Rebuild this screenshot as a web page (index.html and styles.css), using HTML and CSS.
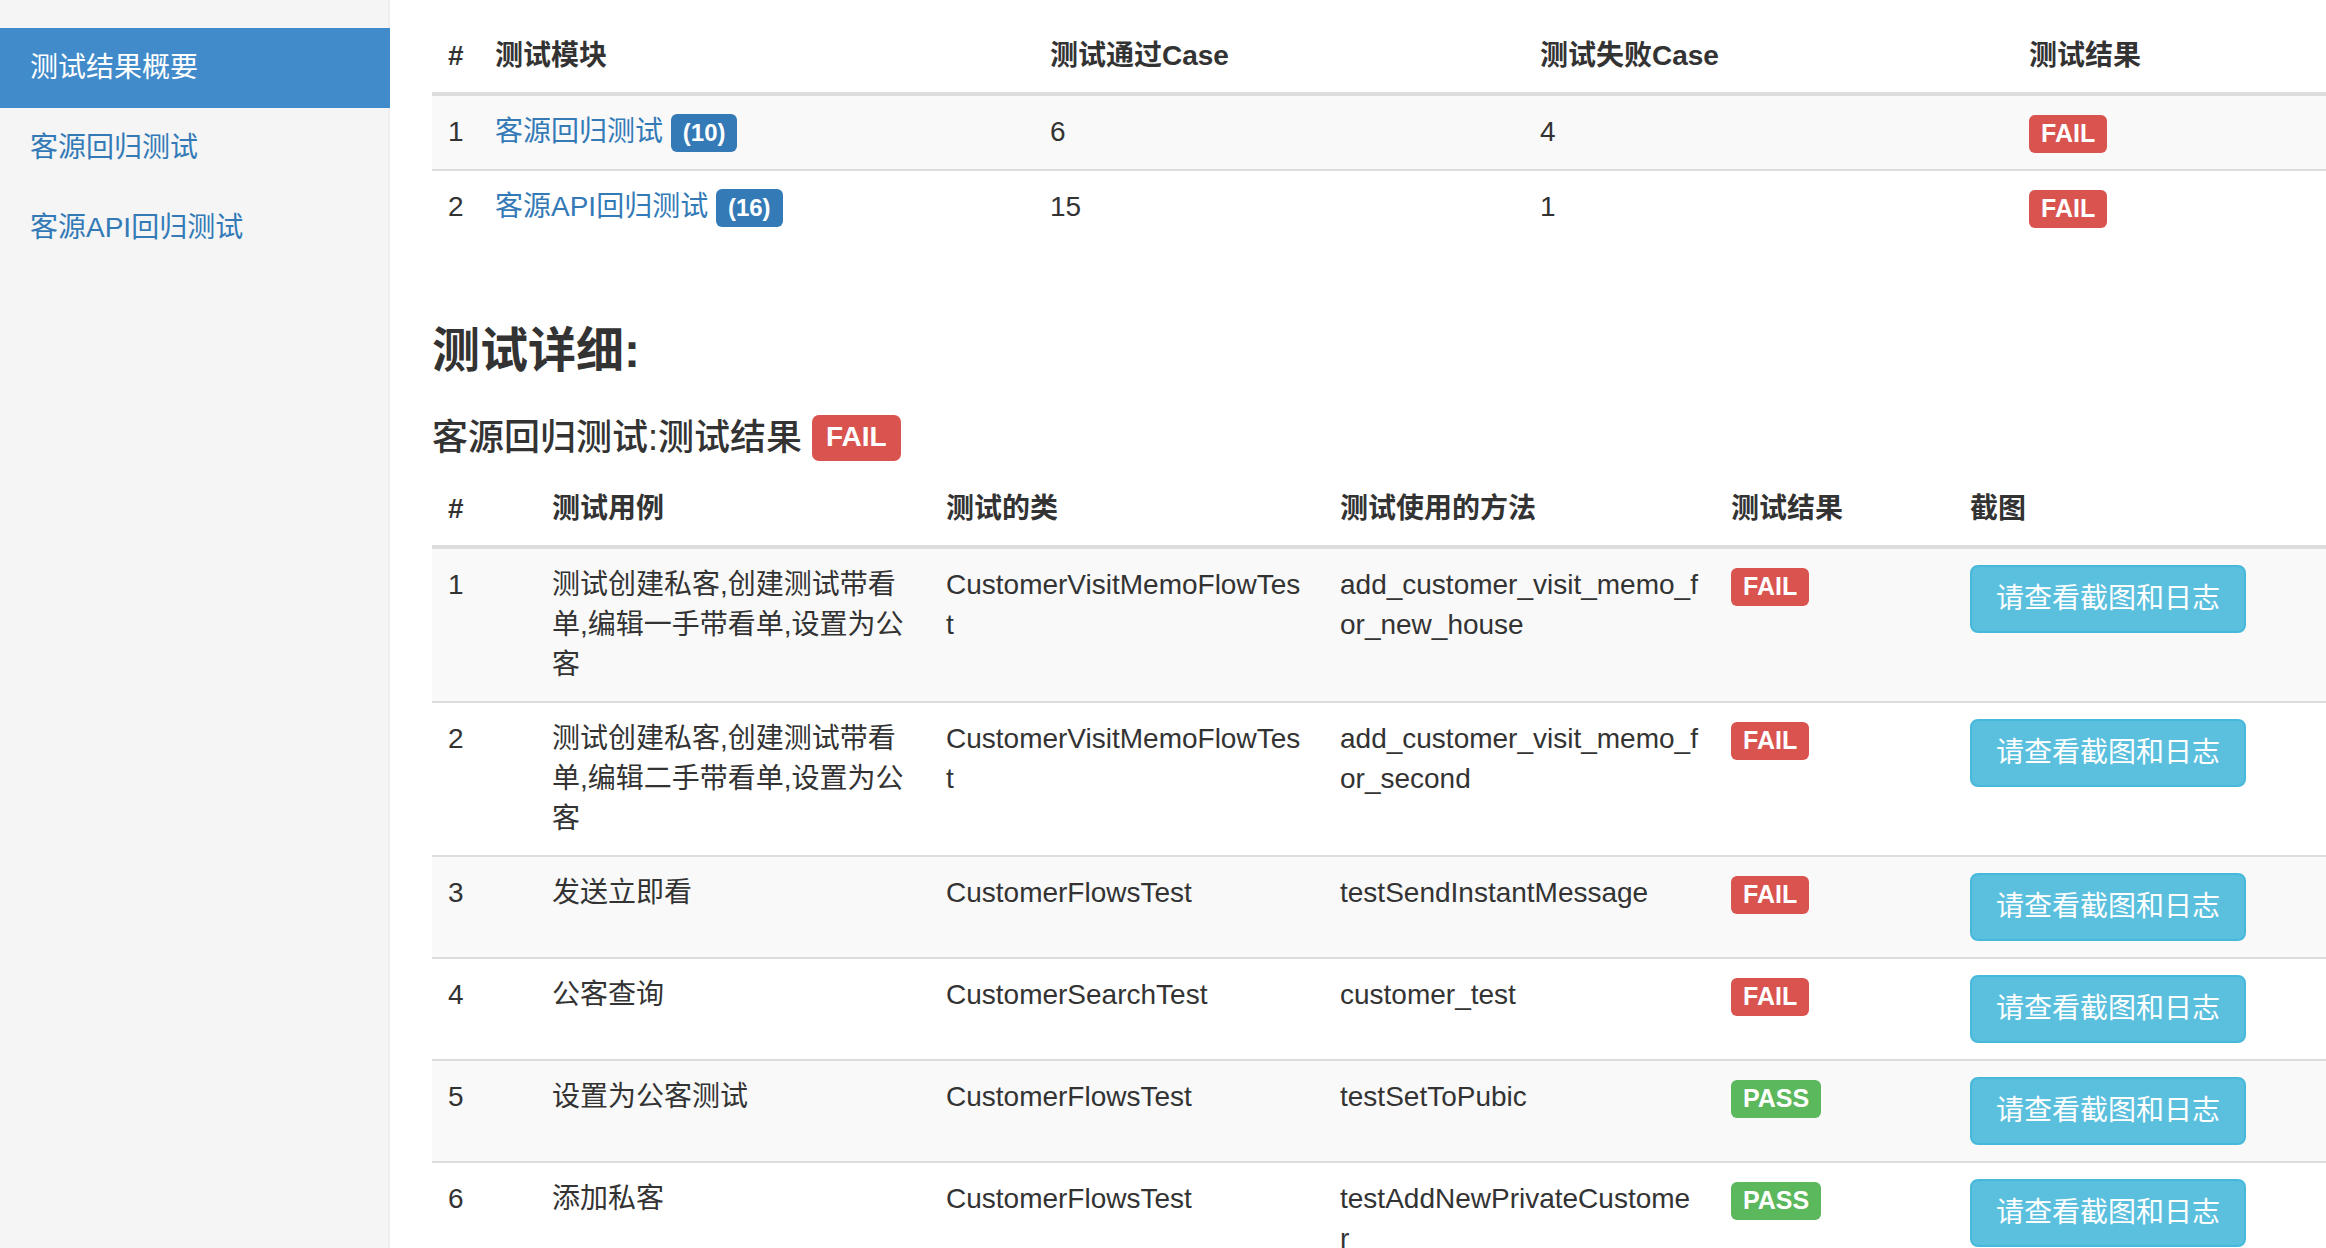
FILE: index.html
```html
<!DOCTYPE html>
<html lang="zh-CN">
<head>
<meta charset="utf-8">
<title>测试报告</title>
<link rel="stylesheet" href="styles.css">
</head>
<body>
<div class="layout">
  <nav class="sidebar">
    <ul class="nav-sidebar">
      <li class="active"><a href="#summary">测试结果概要</a></li>
      <li><a href="#m1">客源回归测试</a></li>
      <li><a href="#m2">客源API回归测试</a></li>
    </ul>
  </nav>
  <main class="main">
    <table class="table table-summary" id="summary">
      <colgroup>
        <col class="s-idx"><col class="s-mod"><col class="s-pass"><col class="s-fail"><col class="s-res">
      </colgroup>
      <thead>
        <tr><th>#</th><th>测试模块</th><th>测试通过Case</th><th>测试失败Case</th><th>测试结果</th></tr>
      </thead>
      <tbody>
        <tr>
          <td>1</td>
          <td><a class="link" href="#m1">客源回归测试</a> <span class="count">(10)</span></td>
          <td>6</td>
          <td>4</td>
          <td><span class="label label-danger">FAIL</span></td>
        </tr>
        <tr>
          <td>2</td>
          <td><a class="link" href="#m2">客源API回归测试</a> <span class="count">(16)</span></td>
          <td>15</td>
          <td>1</td>
          <td><span class="label label-danger">FAIL</span></td>
        </tr>
      </tbody>
    </table>

    <h3 class="section-title">测试详细:</h3>
    <h4 class="module-title" id="m1">客源回归测试:测试结果<span class="label-lg label-danger">FAIL</span></h4>

    <table class="table table-detail">
      <colgroup>
        <col class="d-idx"><col class="d-case"><col class="d-class"><col class="d-method"><col class="d-res"><col class="d-shot">
      </colgroup>
      <thead>
        <tr><th>#</th><th>测试用例</th><th>测试的类</th><th>测试使用的方法</th><th>测试结果</th><th>截图</th></tr>
      </thead>
      <tbody>
        <tr>
          <td>1</td>
          <td>测试创建私客,创建测试带看单,编辑一手带看单,设置为公客</td>
          <td>CustomerVisitMemoFlowTest</td>
          <td>add_customer_visit_memo_for_new_house</td>
          <td><span class="label label-danger">FAIL</span></td>
          <td><a class="btn btn-info" href="#">请查看截图和日志</a></td>
        </tr>
        <tr>
          <td>2</td>
          <td>测试创建私客,创建测试带看单,编辑二手带看单,设置为公客</td>
          <td>CustomerVisitMemoFlowTest</td>
          <td>add_customer_visit_memo_for_second</td>
          <td><span class="label label-danger">FAIL</span></td>
          <td><a class="btn btn-info" href="#">请查看截图和日志</a></td>
        </tr>
        <tr>
          <td>3</td>
          <td>发送立即看</td>
          <td>CustomerFlowsTest</td>
          <td>testSendInstantMessage</td>
          <td><span class="label label-danger">FAIL</span></td>
          <td><a class="btn btn-info" href="#">请查看截图和日志</a></td>
        </tr>
        <tr>
          <td>4</td>
          <td>公客查询</td>
          <td>CustomerSearchTest</td>
          <td>customer_test</td>
          <td><span class="label label-danger">FAIL</span></td>
          <td><a class="btn btn-info" href="#">请查看截图和日志</a></td>
        </tr>
        <tr>
          <td>5</td>
          <td>设置为公客测试</td>
          <td>CustomerFlowsTest</td>
          <td>testSetToPubic</td>
          <td><span class="label label-success">PASS</span></td>
          <td><a class="btn btn-info" href="#">请查看截图和日志</a></td>
        </tr>
        <tr>
          <td>6</td>
          <td>添加私客</td>
          <td>CustomerFlowsTest</td>
          <td>testAddNewPrivateCustomer</td>
          <td><span class="label label-success">PASS</span></td>
          <td><a class="btn btn-info" href="#">请查看截图和日志</a></td>
        </tr>
      </tbody>
    </table>
  </main>
</div>
</body>
</html>
```

FILE: styles.css
```css
* { box-sizing: border-box; }

html, body {
  margin: 0;
  padding: 0;
}

body {
  font-family: "Liberation Sans", "Noto Sans CJK SC", sans-serif;
  font-size: 28px;
  line-height: 40px;
  color: #333;
  background: #fff;
  overflow: hidden;
}

.layout {
  display: flex;
  min-height: 1248px;
}

/* Sidebar */
.sidebar {
  width: 390px;
  flex: none;
  background: #f5f5f5;
  border-right: 2px solid #eee;
  padding-top: 28px;
}

.nav-sidebar {
  list-style: none;
  margin: 0 -2px 0 0;
  padding: 0;
}

.nav-sidebar a {
  display: block;
  padding: 20px 30px;
  color: #337ab7;
  text-decoration: none;
}

.nav-sidebar .active a {
  background: #428bca;
  color: #fff;
}

/* Main */
.main {
  flex: 1;
  min-width: 0;
  padding: 20px 0 0 42px;
}

.table {
  width: 100%;
  border-collapse: collapse;
  border-spacing: 0;
  table-layout: fixed;
  margin: 0;
}

.table th,
.table td {
  padding: 16px;
  text-align: left;
  vertical-align: top;
  word-break: break-all;
}

.table thead th {
  vertical-align: bottom;
  font-weight: bold;
  border-bottom: 4px solid #ddd;
}

.table tbody td {
  border-top: 2px solid #ddd;
}

.table tbody tr:nth-child(odd) {
  background: #f9f9f9;
}

/* column widths */
.s-idx { width: 47px; }
.s-mod { width: 555px; }
.s-pass { width: 490px; }
.s-fail { width: 489px; }
.s-res { width: 313px; }

.d-idx { width: 104px; }
.d-case { width: 394px; }
.d-class { width: 394px; }
.d-method { width: 391px; }
.d-res { width: 239px; }
.d-shot { width: 372px; }

.link {
  color: #337ab7;
  text-decoration: none;
}

.count {
  display: inline-block;
  vertical-align: top;
  margin-top: 2px;
  font-size: 24px;
  line-height: 1;
  font-weight: bold;
  padding: 7px 12px;
  color: #fff;
  background: #337ab7;
  border-radius: 6px;
}

.label {
  display: inline-block;
  vertical-align: top;
  margin-top: 3px;
  font-size: 25px;
  line-height: 1;
  font-weight: bold;
  padding: 6px 12px 7px;
  color: #fff;
  border-radius: 6px;
}

.label-danger { background: #d9534f; }
.label-success { background: #5cb85c; }

.section-title {
  margin: 80px 0 0;
  font-size: 48px;
  line-height: 53px;
  font-weight: bold;
}

.module-title {
  display: flex;
  align-items: center;
  gap: 10px;
  margin: 38px 0 12px;
  font-size: 36px;
  line-height: 46px;
  font-weight: 500;
}

.label-lg {
  display: inline-block;
  font-size: 28px;
  line-height: 1;
  font-weight: bold;
  padding: 8px 14px 10px;
  color: #fff;
  border-radius: 7px;
}

.btn {
  display: inline-block;
  vertical-align: top;
  font-size: 28px;
  line-height: 40px;
  padding: 12px 24px;
  border: 2px solid transparent;
  border-radius: 8px;
  text-decoration: none;
  white-space: nowrap;
  word-break: keep-all;
}

.btn-info {
  color: #fff;
  background: #5bc0de;
  border-color: #46b8da;
}
```
